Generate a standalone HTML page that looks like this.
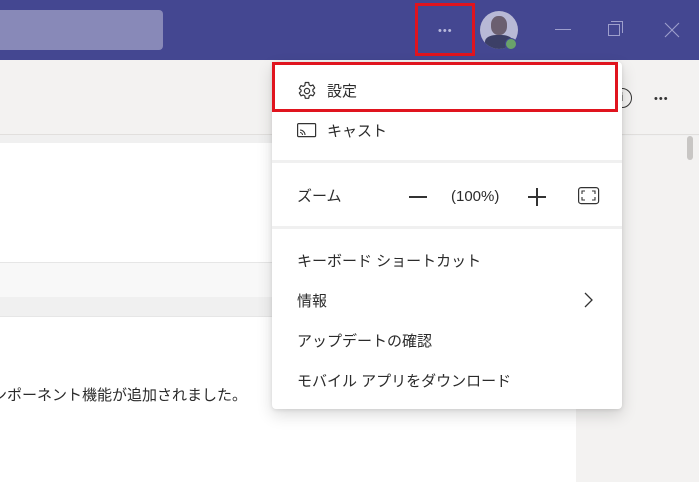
<!DOCTYPE html>
<html><head><meta charset="utf-8"><style>
*{margin:0;padding:0;box-sizing:border-box}
body{width:699px;height:482px;overflow:hidden;position:relative;background:#f0f0f0;font-family:"Liberation Sans","Noto Sans CJK JP",sans-serif;color:#242424}
.a{position:absolute}
.t{font-size:15px;line-height:20px;color:#2b2b2b;white-space:nowrap}
</style></head><body>
<div class="a" style="left:0;top:0;width:699px;height:60px;background:#444791"></div>
<div class="a" style="left:-6px;top:10px;width:169px;height:40px;background:#8889b8;border-radius:4px"></div>
<div class="a" style="left:438px;top:25px;color:#b8b9dc;font-size:11px;letter-spacing:1px">•••</div>
<div class="a" style="left:480px;top:11px;width:38px;height:38px;border-radius:50%;background:#b8b9d6;overflow:hidden">
  <div class="a" style="left:11px;top:5px;width:16px;height:19px;border-radius:45%;background:#6b5f70"></div>
  <div class="a" style="left:5px;top:24px;width:28px;height:16px;border-radius:40% 40% 0 0;background:#3c3f66"></div>
</div>
<div class="a" style="left:505px;top:38px;width:12px;height:12px;border-radius:50%;background:#6aa26a;border:1.5px solid #444791"></div>
<div class="a" style="left:555px;top:29px;width:16px;height:1px;background:#9e9fcc"></div>
<div class="a" style="left:608px;top:24px;width:12px;height:12px;border:1px solid #9e9fcc"></div>
<div class="a" style="left:611px;top:21px;width:12px;height:12px;border-top:1px solid #9e9fcc;border-right:1px solid #9e9fcc"></div>
<svg class="a" style="left:664px;top:22px" width="16" height="16"><path d="M1 1L15 15M15 1L1 15" stroke="#9e9fcc" stroke-width="1.1"/></svg>
<div class="a" style="left:415px;top:3px;width:60px;height:53px;border:3px solid #e0141e"></div>

<div class="a" style="left:0;top:60px;width:699px;height:75px;background:#f3f2f1;border-bottom:1px solid #e1dfdd"></div>
<div class="a" style="left:612px;top:88px;width:20px;height:20px;border:1.5px solid #333;border-radius:50%;font-size:12px;text-align:center;line-height:17px">i</div>
<div class="a" style="left:654px;top:93px;font-size:11px;letter-spacing:1px;color:#333">•••</div>
<div class="a" style="left:576px;top:136px;width:123px;height:346px;background:#f3f2f1"></div>
<div class="a" style="left:687px;top:136px;width:6px;height:24px;border-radius:3px;background:#c8c6c4"></div>

<div class="a" style="left:0;top:143px;width:576px;height:119px;background:#fff"></div>
<div class="a" style="left:0;top:262px;width:576px;height:35px;background:#f8f8f8;border-top:1px solid #e6e6e6"></div>
<div class="a" style="left:0;top:316px;width:576px;height:166px;background:#fff;border-top:1px solid #e6e6e6"></div>
<div class="a t" style="left:-8px;top:386px;font-size:15px">ンポーネント機能が追加されました。</div>

<div class="a" style="left:272px;top:62px;width:350px;height:347px;background:#fff;border-radius:4px;box-shadow:0 6px 16px rgba(0,0,0,.14),0 1px 4px rgba(0,0,0,.1)"></div>
<svg class="a" style="left:297px;top:81px" width="20" height="20" viewBox="0 0 20 20"><path d="M8.3 1.5h3.4l.5 2.4 1.5.9 2.3-.8 1.7 2.9-1.8 1.6v1.8l1.8 1.6-1.7 2.9-2.3-.8-1.5.9-.5 2.4H8.3l-.5-2.4-1.5-.9-2.3.8-1.7-2.9 1.8-1.6V9.1L2.3 7.5 4 4.6l2.3.8 1.5-.9z" fill="none" stroke="#333" stroke-width="1.2" stroke-linejoin="round"/><circle cx="10" cy="10" r="2.6" fill="none" stroke="#333" stroke-width="1.2"/></svg>
<div class="a t" style="left:327px;top:82px">設定</div>
<svg class="a" style="left:297px;top:122px" width="20" height="16"><rect x="0.6" y="1.6" width="18" height="13" rx="1" fill="none" stroke="#333" stroke-width="1.2"/><path d="M3 8a5 5 0 0 1 5 5M3 10.5a2.5 2.5 0 0 1 2.5 2.5" fill="none" stroke="#333" stroke-width="1.1"/></svg>
<div class="a t" style="left:327px;top:122px">キャスト</div>
<div class="a" style="left:272px;top:160px;width:350px;height:3px;background:#f0f0f0"></div>
<div class="a t" style="left:297px;top:187px">ズーム</div>
<div class="a" style="left:409px;top:196px;width:18px;height:1.5px;background:#333"></div>
<div class="a t" style="left:451px;top:187px">(100%)</div>
<div class="a" style="left:528px;top:196px;width:18px;height:1.5px;background:#333"></div>
<div class="a" style="left:536px;top:188px;width:1.5px;height:18px;background:#333"></div>
<svg class="a" style="left:578px;top:187px" width="22" height="18"><rect x="0.6" y="0.6" width="20" height="16" rx="2.5" fill="none" stroke="#333" stroke-width="1.2"/><path d="M4 7V4h3M14 4h3v3M17 10v3h-3M7 13H4v-3" fill="none" stroke="#333" stroke-width="1.1"/></svg>
<div class="a" style="left:272px;top:226px;width:350px;height:3px;background:#f0f0f0"></div>
<div class="a t" style="left:297px;top:252px">キーボード ショートカット</div>
<div class="a t" style="left:297px;top:292px">情報</div>
<svg class="a" style="left:584px;top:292px" width="10" height="16"><path d="M1 1l7 7-7 7" fill="none" stroke="#333" stroke-width="1.3"/></svg>
<div class="a t" style="left:297px;top:332px">アップデートの確認</div>
<div class="a t" style="left:297px;top:372px">モバイル アプリをダウンロード</div>
<div class="a" style="left:272px;top:62px;width:346px;height:50px;border:3px solid #e0141e"></div>
</body></html>
